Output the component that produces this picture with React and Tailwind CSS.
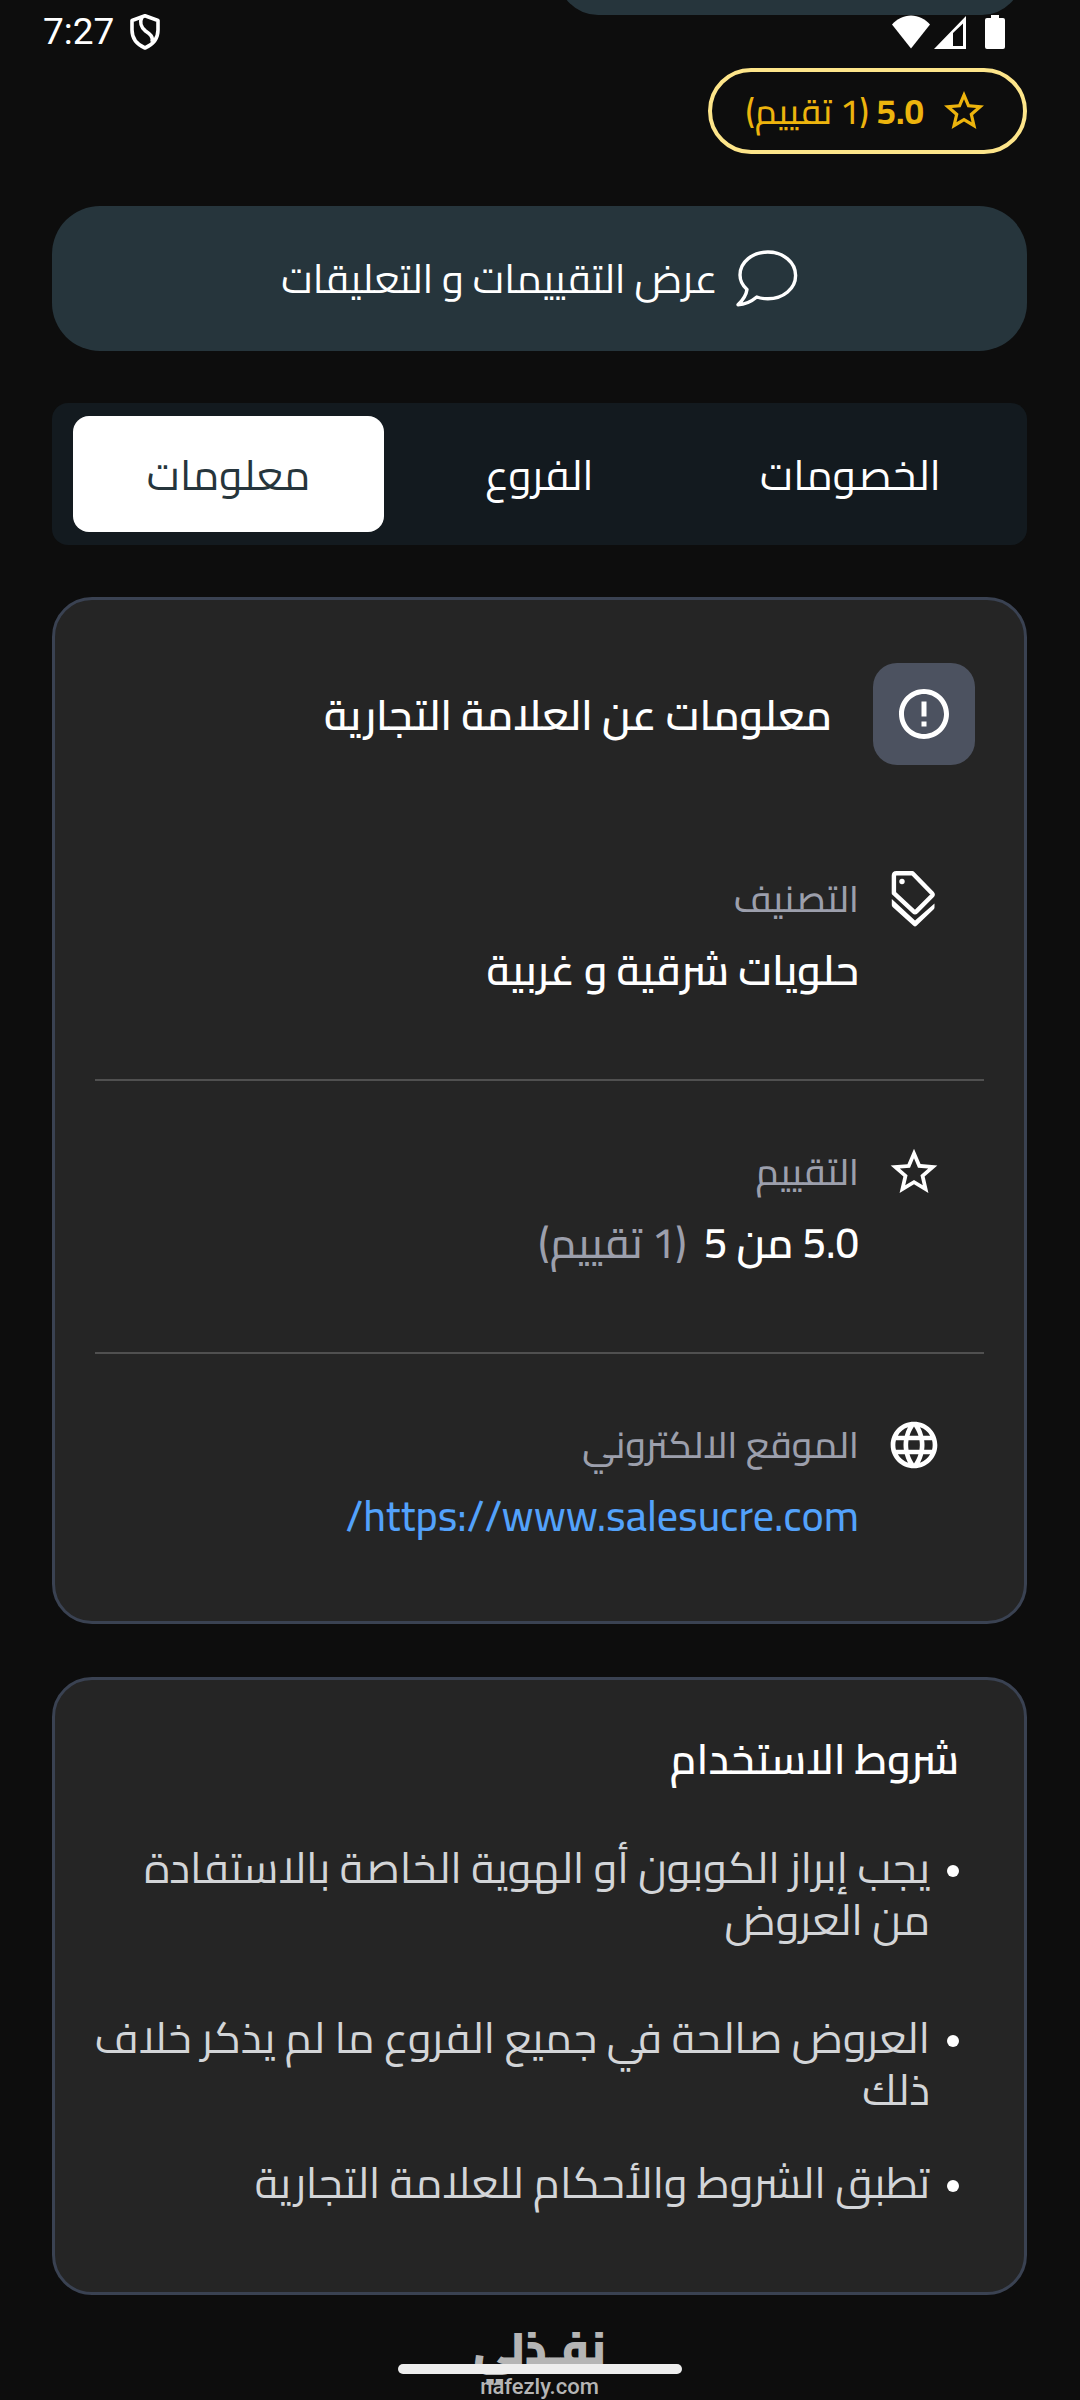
import React from "react";
import { MdErrorOutline, MdLanguage, MdStarOutline } from "react-icons/md";

const tabs = [
  { name: "الخصومات", active: false },
  { name: "الفروع", active: false },
  { name: "معلومات", active: true },
];

const ChatIcon = () => (
  <svg
    className="w-[62px] h-[57px] shrink-0"
    viewBox="15 12 62 57"
    fill="none"
    stroke="currentColor"
    strokeWidth="3.4"
    strokeLinejoin="round"
  >
    <path d="M26 51.5C21.5 47.5 19 42.5 19 37C19 24 31.5 14 46.8 14C62.5 14 74.6 24.5 74.6 37.5C74.6 50.5 62.5 60.8 46.8 60.8C43 60.8 39 60.2 35.8 59C31 63 24.5 66.5 17 66.8C21.5 62.5 25.2 57.5 26 51.5Z" />
  </svg>
);

const TagsIcon = () => (
  <svg className="size-14" viewBox="7 10 56 56" fill="none" stroke="currentColor">
    <path
      d="M17.5 12.2H33.5L53 32.2Q54.2 33.5 53 34.8L37.2 50.6Q36 51.7 34.8 50.6L14.9 32.2V14.8Q14.9 12.2 17.5 12.2Z"
      strokeWidth="4.4"
      strokeLinejoin="round"
    />
    <circle cx="23" cy="20.5" r="2.7" fill="currentColor" stroke="none" />
    <path
      d="M12.8 38L36 59.6L55.5 42.4V46.5Q55.5 47.5 54.5 48.5L37.5 64.8Q36 66 34.5 64.8L13.6 46Q12.8 45.2 12.8 44Z"
      fill="currentColor"
      stroke="none"
    />
  </svg>
);

const ShieldIcon = () => (
  <svg
    className="w-[30px] h-[36px]"
    viewBox="0 0 30 36"
    fill="none"
    stroke="currentColor"
    strokeWidth="3.6"
    strokeLinejoin="round"
  >
    <path d="M15 1.8L28 6.5V16C28 24 23 30.5 15 34C7 30.5 2 24 2 16V6.5Z" />
    <path d="M12 3C9.5 8 11 13.5 15.5 17C20 20 23.5 22.5 22 28" />
  </svg>
);

const StatusBar = () => (
  <div
    dir="ltr"
    className="absolute inset-x-0 top-0 flex items-center justify-between pt-3 pl-[43px] pr-[75px]"
  >
    <div className="flex items-center gap-4">
      <span className="font-[Roboto,sans-serif] text-[37px] leading-10">7:27</span>
      <ShieldIcon />
    </div>
    <div className="flex items-center">
      <svg className="w-[40px] h-[34px]" viewBox="0 0 40 34" fill="currentColor">
        <path d="M20 33.5L1 9.5C6 4 12.5 0.5 20 0.5S34 4 39 9.5Z" />
      </svg>
      <svg className="ml-[2px] w-[34px] h-[34px]" viewBox="0 0 34 34" fill="currentColor">
        <path fillRule="evenodd" d="M1 34L33 1V34ZM20 18V31H30V8.5Z" />
      </svg>
      <svg className="ml-[18px] w-[20px] h-[34px]" viewBox="0 0 20 34" fill="currentColor">
        <path d="M6 0H14V3H18Q20 3 20 5V32Q20 34 18 34H2Q0 34 0 32V5Q0 3 2 3H6Z" />
      </svg>
    </div>
  </div>
);

const InfoRow = ({ icon, label, children }) => (
  <div className="flex gap-[27px] px-[42px] pt-[63px] pb-[79px]">
    <div className="size-14 shrink-0">{icon}</div>
    <div>
      <h3 className="text-[37px] leading-[56px] font-medium text-[#9c9fac]">{label}</h3>
      <p className="mt-[13px] text-[42px] leading-[60px] font-semibold">{children}</p>
    </div>
  </div>
);

const Term = ({ className, children }) => (
  <li className={className}>
    <span className="mt-[23px] size-3 shrink-0 rounded-full bg-white" />
    {children}
  </li>
);

const App = () => {
  return (
    <div
      dir="rtl"
      className="relative min-h-screen overflow-hidden bg-[#0d0d0d] text-white font-[Cairo,sans-serif]"
    >
      <div className="pl-[52px] pr-[53px]">
        {/* bottom of the brand card, scrolled away under the status bar */}
        <div className="mr-[5px] -mt-[81px] h-24 w-[464px] rounded-[40px] bg-[#26353c]" />

        <div className="mt-[53px] inline-flex h-[86px] items-center gap-4 rounded-full border-4 border-[#fde58a] pr-[35px] pl-[33px] text-[#edb40d]">
          <MdStarOutline className="size-12" />
          <p className="text-[35px] leading-[52px] font-medium">
            <b>5.0</b> (1 تقييم)
          </p>
        </div>

        <button className="mt-[52px] flex h-[145px] w-full items-center justify-center gap-[18px] rounded-[48px] bg-[#26353c] text-[40px]">
          <ChatIcon />
          عرض التقييمات و التعليقات
        </button>

        <div className="mt-[52px] flex rounded-2xl bg-[#131a1f] px-[21px] py-[13px]">
          {tabs.map((tab) => (
            <button
              key={tab.name}
              className={
                tab.active
                  ? "h-[116px] flex-1 rounded-2xl bg-white text-[42px] text-[#26353c]"
                  : "h-[116px] flex-1 rounded-2xl text-[42px]"
              }
            >
              {tab.name}
            </button>
          ))}
        </div>

        <section className="mt-[52px] rounded-[40px] border-[3px] border-[#3a4252] bg-[#252525] px-10 pt-[63px]">
          <div className="mb-[43px] flex items-center gap-[41px] px-[9px]">
            <div className="flex size-[102px] items-center justify-center rounded-3xl bg-[#4c5260]">
              <MdErrorOutline className="size-[60px]" />
            </div>
            <h2 className="pt-0.5 text-[42px] leading-[60px] font-semibold">
              معلومات عن العلامة التجارية
            </h2>
          </div>
          <div className="-mb-1 divide-y-2 divide-[#505050]">
            <InfoRow icon={<TagsIcon />} label="التصنيف">
              حلويات شرقية و غربية
            </InfoRow>
            <InfoRow icon={<MdStarOutline className="size-14" />} label="التقييم">
              5.0 من 5 <span className="mr-2 font-medium text-[#9c9fac]">(1 تقييم)</span>
            </InfoRow>
            <InfoRow icon={<MdLanguage className="size-14" />} label="الموقع الالكتروني">
              <a href="https://www.salesucre.com/" className="font-medium text-[#53a2fb]">
                https://www.salesucre.com/
              </a>
            </InfoRow>
          </div>
        </section>

        <section className="mt-[53px] rounded-[40px] border-[3px] border-[#3a4252] bg-[#252525] pt-[49px] pr-[65px] pl-[32px] pb-[83px]">
          <h2 className="text-[42px] leading-[60px] font-semibold">شروط الاستخدام</h2>
          <ul className="mt-[53px] flex flex-col gap-[41px] text-[43px] leading-[52px] text-[#d3d5d8]">
            <Term className="flex gap-[17px] pb-[25px]">
              يجب إبراز الكوبون أو الهوية الخاصة بالاستفادة من العروض
            </Term>
            <Term className="flex gap-[17px]">
              العروض صالحة في جميع الفروع ما لم يذكر خلاف ذلك
            </Term>
            <Term className="flex gap-[17px]">
              تطبق الشروط والأحكام للعلامة التجارية
            </Term>
          </ul>
        </section>

        <footer className="flex flex-col items-center pt-[27px] text-[#b5b5b5]">
          <p className="text-[44px] leading-[52px] font-black">نفـذلي</p>
          <p className="font-[Roboto,sans-serif] text-[22px] leading-[26px] font-medium">
            nafezly.com
          </p>
        </footer>
      </div>

      <StatusBar />
      <div className="absolute inset-x-0 bottom-[26px] mx-auto h-[10px] w-[284px] rounded-full bg-[#ededed]" />
    </div>
  );
};

export default App;
